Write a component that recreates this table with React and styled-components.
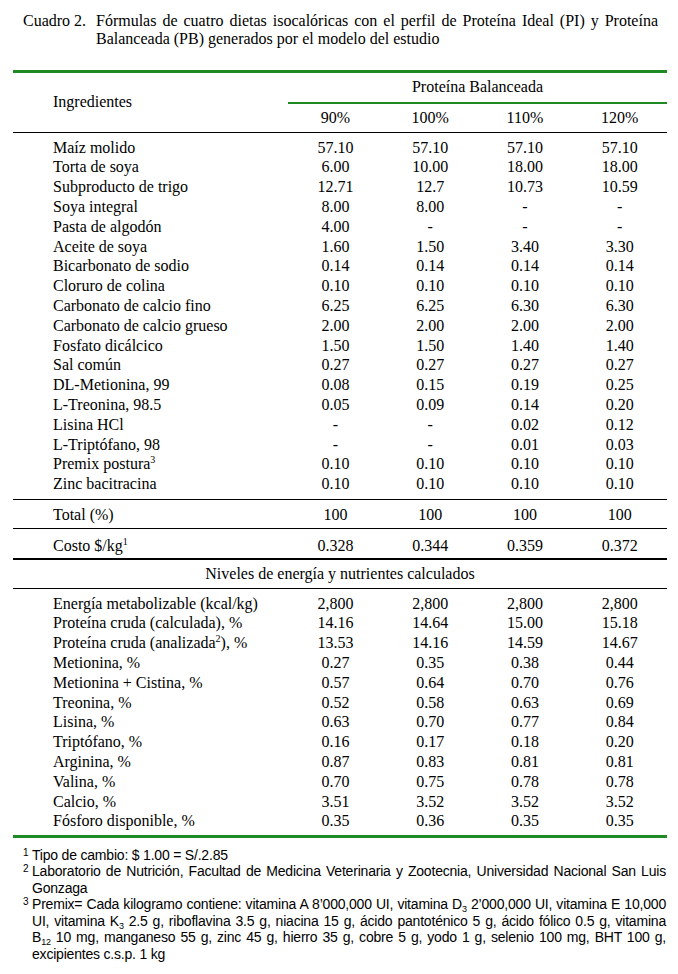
import React from "react";
import styled, { createGlobalStyle } from "styled-components";

const GREEN = "#1f8a24";

const GlobalStyle = createGlobalStyle`
  html, body {
    margin: 0;
    padding: 0;
    background: #ffffff;
    color: #000000;
  }
  body {
    font-family: "Liberation Serif", "Times New Roman", serif;
  }
`;

const ingredients = [
  ["Maíz molido", "57.10", "57.10", "57.10", "57.10"],
  ["Torta de soya", "6.00", "10.00", "18.00", "18.00"],
  ["Subproducto de trigo", "12.71", "12.7", "10.73", "10.59"],
  ["Soya integral", "8.00", "8.00", "-", "-"],
  ["Pasta de algodón", "4.00", "-", "-", "-"],
  ["Aceite de soya", "1.60", "1.50", "3.40", "3.30"],
  ["Bicarbonato de sodio", "0.14", "0.14", "0.14", "0.14"],
  ["Cloruro de colina", "0.10", "0.10", "0.10", "0.10"],
  ["Carbonato de calcio fino", "6.25", "6.25", "6.30", "6.30"],
  ["Carbonato de calcio grueso", "2.00", "2.00", "2.00", "2.00"],
  ["Fosfato dicálcico", "1.50", "1.50", "1.40", "1.40"],
  ["Sal común", "0.27", "0.27", "0.27", "0.27"],
  ["DL-Metionina, 99", "0.08", "0.15", "0.19", "0.25"],
  ["L-Treonina, 98.5", "0.05", "0.09", "0.14", "0.20"],
  ["Lisina HCl", "-", "-", "0.02", "0.12"],
  ["L-Triptófano, 98", "-", "-", "0.01", "0.03"],
  [<>Premix postura<sup>3</sup></>, "0.10", "0.10", "0.10", "0.10"],
  ["Zinc bacitracina", "0.10", "0.10", "0.10", "0.10"],
];

const nutrients = [
  ["Energía metabolizable (kcal/kg)", "2,800", "2,800", "2,800", "2,800"],
  ["Proteína cruda (calculada), %", "14.16", "14.64", "15.00", "15.18"],
  [<>Proteína cruda (analizada<sup>2</sup>), %</>, "13.53", "14.16", "14.59", "14.67"],
  ["Metionina, %", "0.27", "0.35", "0.38", "0.44"],
  ["Metionina + Cistina, %", "0.57", "0.64", "0.70", "0.76"],
  ["Treonina, %", "0.52", "0.58", "0.63", "0.69"],
  ["Lisina, %", "0.63", "0.70", "0.77", "0.84"],
  ["Triptófano, %", "0.16", "0.17", "0.18", "0.20"],
  ["Arginina, %", "0.87", "0.83", "0.81", "0.81"],
  ["Valina, %", "0.70", "0.75", "0.78", "0.78"],
  ["Calcio, %", "3.51", "3.52", "3.52", "3.52"],
  ["Fósforo disponible, %", "0.35", "0.36", "0.35", "0.35"],
];

const Page = styled.div`
  width: 678px;
  padding: 12px 0 20px;
`;

const Caption = styled.div`
  display: flex;
  padding-left: 23px;
  font-size: 16px;
  line-height: 18.3px;
`;

const CaptionLabel = styled.div`
  flex: none;
  width: 73px;
`;

const CaptionText = styled.div`
  width: 562px;
  text-align: justify;
`;

const Table = styled.table`
  margin: 21px 0 0 13px;
  width: 654px;
  table-layout: fixed;
  border-collapse: separate;
  border-spacing: 0;
  border-top: 3px solid ${GREEN};
  border-bottom: 3px solid ${GREEN};
  font-size: 16px;
  line-height: 19.8px;

  sup {
    font-size: 10px;
    line-height: 0;
    vertical-align: 6px;
  }
`;

const HeadCell = styled.th`
  font-weight: normal;
  padding: ${(p) => p.$pad || "4px 0 4px"};
  text-align: ${(p) => (p.$left ? "left" : "center")};
  padding-left: ${(p) => (p.$left ? "40px" : "0")};
  vertical-align: middle;
  border-bottom: ${(p) =>
    p.$green ? `2px solid ${GREEN}` : p.$rule ? "1px solid #000" : "none"};
`;

const Label = styled.td`
  padding: ${(p) => p.$pad || "0"};
  padding-left: 40px;
  text-align: left;
  white-space: nowrap;
  border-bottom: ${(p) => p.$rule || "none"};
`;

const Num = styled.td`
  padding: ${(p) => p.$pad || "0"};
  text-align: center;
  border-bottom: ${(p) => p.$rule || "none"};
`;

const Section = styled.td`
  padding: 4px 0 4.5px;
  text-align: center;
  border-bottom: 1px solid #000;
`;

const Notes = styled.div`
  margin-top: 8.5px;
  font-family: "Liberation Sans", Arial, sans-serif;
  font-size: 14px;
  line-height: 16.5px;
  letter-spacing: -0.2px;
`;

const Note = styled.div`
  display: flex;
  padding-left: 23px;
`;

const NoteMark = styled.span`
  flex: none;
  width: 9px;
  font-size: 10px;
  line-height: 11px;
`;

const NoteText = styled.div`
  width: 634px;

  sub {
    font-size: 9px;
    line-height: 0;
    vertical-align: -3px;
  }
`;

const NoteLine = styled.div`
  white-space: nowrap;
  text-align: ${(p) => (p.$justify ? "justify" : "left")};
  text-align-last: ${(p) => (p.$justify ? "justify" : "left")};
`;

const DataRow = ({ row, pad, rule }) => (
  <tr>
    <Label $pad={pad} $rule={rule}>{row[0]}</Label>
    {row.slice(1).map((v, i) => (
      <Num key={i} $pad={pad} $rule={rule}>{v}</Num>
    ))}
  </tr>
);

const rowPad = (i, n, top, bottom) => {
  if (i === 0) return `${top}px 0 0`;
  if (i === n - 1) return `0 0 ${bottom}px`;
  return "0";
};

const App = () => (
  <Page>
    <GlobalStyle />
    <Caption>
      <CaptionLabel>Cuadro 2.</CaptionLabel>
      <CaptionText>
        Fórmulas de cuatro dietas isocalóricas con el perfil de Proteína Ideal (PI) y
        Proteína Balanceada (PB) generados por el modelo del estudio
      </CaptionText>
    </Caption>

    <Table>
      <colgroup>
        <col style={{ width: "275px" }} />
        <col />
        <col />
        <col />
        <col />
      </colgroup>
      <thead>
        <tr>
          <HeadCell $left $rule rowSpan={2}>Ingredientes</HeadCell>
          <HeadCell colSpan={4} $green $pad="4px 0 5.5px">Proteína Balanceada</HeadCell>
        </tr>
        <tr>
          {["90%", "100%", "110%", "120%"].map((h) => (
            <HeadCell key={h} $rule $pad="3.7px 0 4.5px">{h}</HeadCell>
          ))}
        </tr>
      </thead>
      <tbody>
        {ingredients.map((row, i) => (
          <DataRow
            key={i}
            row={row}
            pad={rowPad(i, ingredients.length, 4.7, 5)}
            rule={i === ingredients.length - 1 ? "1px solid #000" : undefined}
          />
        ))}
        <DataRow
          row={["Total (%)", "100", "100", "100", "100"]}
          pad="5.4px 0 3px"
          rule="1px solid #000"
        />
        <DataRow
          row={[<>Costo $/kg<sup>1</sup></>, "0.328", "0.344", "0.359", "0.372"]}
          pad="6.7px 0 2px"
          rule="2px solid #000"
        />
        <tr>
          <Section colSpan={5}>Niveles de energía y nutrientes calculados</Section>
        </tr>
        {nutrients.map((row, i) => (
          <DataRow key={i} row={row} pad={rowPad(i, nutrients.length, 4.7, 4)} />
        ))}
      </tbody>
    </Table>

    <Notes>
      <Note>
        <NoteMark>1</NoteMark>
        <NoteText>
          <NoteLine>Tipo de cambio: $ 1.00 = S/.2.85</NoteLine>
        </NoteText>
      </Note>
      <Note>
        <NoteMark>2</NoteMark>
        <NoteText>
          <NoteLine $justify>
            Laboratorio de Nutrición, Facultad de Medicina Veterinaria y Zootecnia, Universidad
            Nacional San Luis
          </NoteLine>
          <NoteLine>Gonzaga</NoteLine>
        </NoteText>
      </Note>
      <Note>
        <NoteMark>3</NoteMark>
        <NoteText>
          <NoteLine $justify>
            Premix= Cada kilogramo contiene: vitamina A 8’000,000 UI, vitamina D<sub>3</sub>{" "}
            2’000,000 UI, vitamina E 10,000
          </NoteLine>
          <NoteLine $justify>
            UI, vitamina K<sub>3</sub> 2.5 g, riboflavina 3.5 g, niacina 15 g, ácido pantoténico
            5 g, ácido fólico 0.5 g, vitamina
          </NoteLine>
          <NoteLine $justify>
            B<sub>12</sub> 10 mg, manganeso 55 g, zinc 45 g, hierro 35 g, cobre 5 g, yodo 1 g,
            selenio 100 mg, BHT 100 g,
          </NoteLine>
          <NoteLine>excipientes c.s.p. 1 kg</NoteLine>
        </NoteText>
      </Note>
    </Notes>
  </Page>
);

export default App;
